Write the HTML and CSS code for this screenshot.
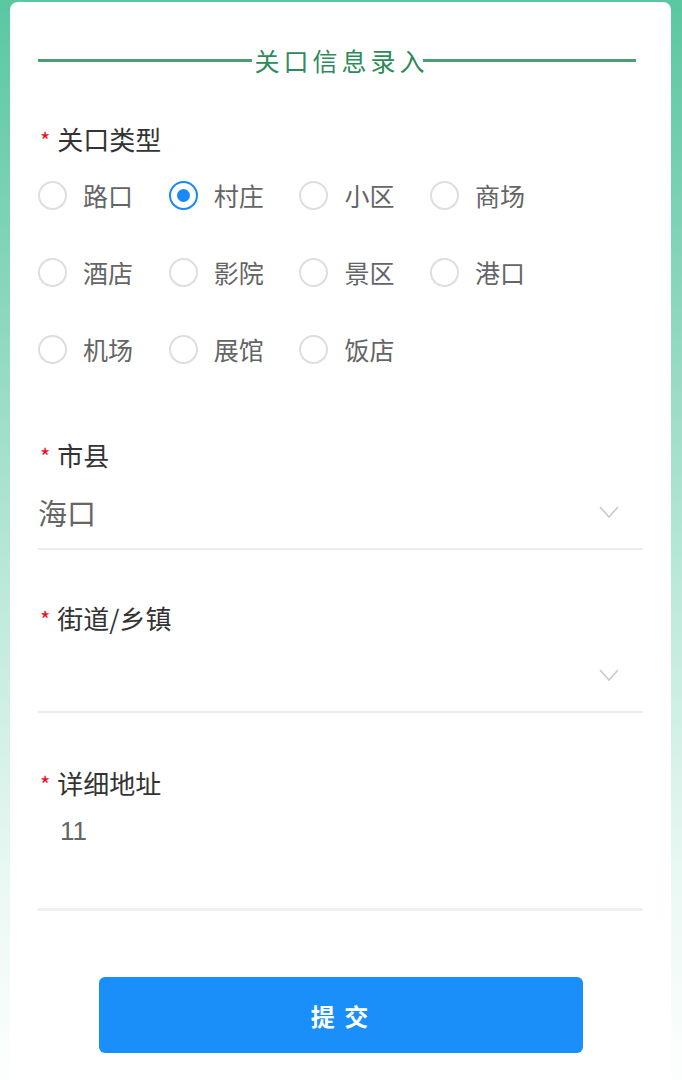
FILE: index.html
```html
<!DOCTYPE html>
<html lang="zh">
<head>
<meta charset="utf-8">
<title>关口信息录入</title>
<link rel="stylesheet" href="styles.css">
</head>
<body>
<div class="page">
  <div class="card">
    <div class="title">
      <span class="title-line"></span>
      <span class="title-text">关口信息录入</span>
      <span class="title-line"></span>
    </div>

    <div class="field field-first">
      <div class="label"><span class="req">*</span>关口类型</div>
      <div class="radio-group">
        <div class="radio"><span class="dot"></span><span class="rtext">路口</span></div>
        <div class="radio checked"><span class="dot"></span><span class="rtext">村庄</span></div>
        <div class="radio"><span class="dot"></span><span class="rtext">小区</span></div>
        <div class="radio"><span class="dot"></span><span class="rtext">商场</span></div>
        <div class="radio"><span class="dot"></span><span class="rtext">酒店</span></div>
        <div class="radio"><span class="dot"></span><span class="rtext">影院</span></div>
        <div class="radio"><span class="dot"></span><span class="rtext">景区</span></div>
        <div class="radio"><span class="dot"></span><span class="rtext">港口</span></div>
        <div class="radio"><span class="dot"></span><span class="rtext">机场</span></div>
        <div class="radio"><span class="dot"></span><span class="rtext">展馆</span></div>
        <div class="radio"><span class="dot"></span><span class="rtext">饭店</span></div>
      </div>
    </div>

    <div class="field field-city">
      <div class="label"><span class="req">*</span>市县</div>
      <div class="select">
        <span class="value">海口</span>
        <svg class="chev" width="20" height="12" viewBox="0 0 20 12"><polyline points="1,1 10,11 19,1" fill="none" stroke="#c8c9cc" stroke-width="1.6"/></svg>
      </div>
    </div>

    <div class="field field-street">
      <div class="label"><span class="req">*</span>街道/乡镇</div>
      <div class="select">
        <span class="value"></span>
        <svg class="chev" width="20" height="12" viewBox="0 0 20 12"><polyline points="1,1 10,11 19,1" fill="none" stroke="#c8c9cc" stroke-width="1.6"/></svg>
      </div>
    </div>

    <div class="field field-addr">
      <div class="label"><span class="req">*</span>详细地址</div>
      <div class="textarea">11</div>
    </div>

    <div class="actions">
      <button class="submit">提 交</button>
    </div>
  </div>
</div>
</body>
</html>
```

FILE: styles.css
```css
html, body {
  margin: 0;
  padding: 0;
}
body {
  font-family: "Noto Sans CJK SC", "Noto Sans", sans-serif;
  background: linear-gradient(to bottom, #5ac7a1 0%, #8fd8bf 30%, #bfeadb 55%, #eaf8f3 80%, #ffffff 100%);
  min-height: 1080px;
  overflow: hidden;
}
.page {
  padding: 2px 11px 0 10px;
}
.card {
  background: #ffffff;
  border-radius: 8px 8px 0 0;
  min-height: 1100px;
  padding: 43px 28px 0 28px;
  box-sizing: border-box;
}
.title {
  display: flex;
  align-items: center;
  height: 30px;
  margin-right: 7px;
}
.title-line {
  flex: 1;
  height: 3px;
  background: #4a9e72;
}
.title-text {
  font-size: 25px;
  line-height: 30px;
  color: #2f8a5b;
  letter-spacing: 4px;
  margin-right: -4px;
  padding-left: 1px;
  position: relative;
  left: 2px;
}
.field-first { margin-top: 46px; }
.field-city { margin-top: 48px; }
.field-street { margin-top: 50px; }
.field-addr { margin-top: 52px; }
.label {
  height: 36px;
  line-height: 36px;
  font-size: 26px;
  color: #333333;
  display: flex;
  align-items: center;
}
.req {
  color: #ee0a24;
  font-size: 22px;
  margin-left: 2px;
  margin-right: 7px;
  line-height: 20px;
}
.radio-group {
  display: grid;
  grid-template-columns: repeat(4, 130.7px);
  grid-auto-rows: 77px;
  margin-top: 1px;
}
.radio {
  display: flex;
  align-items: center;
}
.dot {
  width: 29px;
  height: 29px;
  border: 2px solid #dcdee0;
  border-radius: 50%;
  box-sizing: border-box;
  display: flex;
  align-items: center;
  justify-content: center;
  margin-right: 16px;
  margin-top: -2px;
}
.radio.checked .dot {
  border-color: #1989fa;
}
.radio.checked .dot::after {
  content: "";
  width: 13px;
  height: 13px;
  border-radius: 50%;
  background: #1989fa;
}
.rtext {
  font-size: 25px;
  line-height: 30px;
  color: #646566;
  margin-top: -4px;
}
.select {
  border-bottom: 2px solid #ebedf0;
  display: flex;
  align-items: center;
  justify-content: space-between;
  padding: 2px 24px 0 0;
  height: 73px;
}
.value {
  font-size: 29px;
  color: #646566;
  line-height: 40px;
}
.chev {
  display: block;
}
.textarea {
  height: 110px;
  box-sizing: border-box;
  padding: 10px 22px 0;
  font-size: 26px;
  line-height: 40px;
  color: #646566;
  border-bottom: 3px solid #f0f0f0;
  font-family: "Liberation Sans", "Noto Sans CJK SC", sans-serif;
}
.actions {
  margin-top: 66px;
  display: flex;
  justify-content: center;
}
.submit {
  width: 484px;
  height: 76px;
  border: none;
  border-radius: 6px;
  background: #1a8ffa;
  color: #ffffff;
  font-family: "Noto Sans CJK SC", sans-serif;
  font-size: 24px;
  font-weight: bold;
  letter-spacing: 2px;
}
```
